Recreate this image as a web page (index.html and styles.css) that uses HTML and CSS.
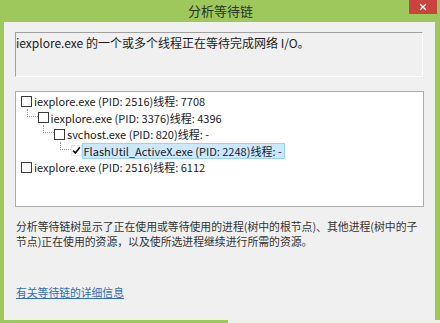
FILE: index.html
```html
<!DOCTYPE html>
<html lang="zh-CN">
<head>
<meta charset="utf-8">
<title>分析等待链</title>
<link rel="stylesheet" href="styles.css">
</head>
<body>
<div class="window">
  <div class="titlebar">
    <span class="title">分析等待链</span>
    <div class="close">
      <svg width="10" height="10" viewBox="0 0 10 10"><path d="M1.5 1.5 L8.5 8.5 M8.5 1.5 L1.5 8.5" stroke="#fff" stroke-width="1.6" fill="none"/></svg>
    </div>
  </div>
  <div class="client">
    <div class="msgbox">iexplore.exe 的一个或多个线程正在等待完成网络 I/O。</div>
    <div class="tree">
      <div class="row l0"><span class="cb"></span><span class="label">iexplore.exe (PID: 2516)线程: 7708</span></div>
      <div class="row l1"><span class="conn"></span><span class="cb"></span><span class="label">iexplore.exe (PID: 3376)线程: 4396</span></div>
      <div class="row l2"><span class="conn"></span><span class="cb"></span><span class="label">svchost.exe (PID: 820)线程: -</span></div>
      <div class="row l3"><span class="conn"></span><span class="cb checked"><svg width="11" height="11" viewBox="0 0 11 11"><path d="M1.4 5.6 L4.2 8.6 L9.6 1.6" stroke="#111" stroke-width="2" fill="none"/></svg></span><span class="label selected">FlashUtil_ActiveX.exe (PID: 2248)线程: -</span></div>
      <div class="row l0"><span class="cb"></span><span class="label">iexplore.exe (PID: 2516)线程: 6112</span></div>
    </div>
    <p class="desc"><span class="line">分析等待链树显示了正在使用或等待使用的进程(树中的根节点)、其他进程(树中的子</span><span class="line">节点)正在使用的资源，以及使所选进程继续进行所需的资源。</span></p>
    <a class="link" href="#">有关等待链的详细信息</a>
  </div>
</div>
</body>
</html>
```
FILE: styles.css
```css
html, body {
  margin: 0;
  padding: 0;
}
body {
  width: 440px;
  height: 323px;
  overflow: hidden;
  font-family: "Noto Sans CJK SC", "Noto Sans", sans-serif;
}
.window {
  width: 440px;
  height: 323px;
  box-sizing: border-box;
  background: #9fc85c linear-gradient(to right, #9fc85c 228px, #eef0ea 228px) no-repeat left bottom / 100% 3px;
  display: flex;
  flex-direction: column;
}
.titlebar {
  height: 22px;
  display: grid;
  grid-template-columns: 1fr auto 1fr;
  align-items: start;
}
.title {
  grid-column: 2;
  font-size: 13px;
  line-height: 22px;
  color: #2a3324;
  padding-left: 1px;
}
.close {
  grid-column: 3;
  justify-self: end;
  margin-right: 3px;
  width: 28px;
  height: 14px;
  background: #c9443f;
  display: flex;
  align-items: center;
  justify-content: center;
}
.close svg {
  width: 8px;
  height: 8px;
}
.client {
  flex: 1;
  margin: 0 5px 3px 4px;
  background: #f0f0f0;
  padding: 10px 12px 0 11px;
  display: flex;
  flex-direction: column;
  align-items: flex-start;
}
.msgbox {
  align-self: stretch;
  height: 45px;
  box-sizing: border-box;
  border-top: 1px solid #a0a0a0;
  border-left: 1px solid #a0a0a0;
  border-right: 1px solid #ffffff;
  border-bottom: 1px solid #ffffff;
  padding: 2px 0 0 0;
  font-size: 12px;
  line-height: 16px;
  color: #1a1a1a;
}
.tree {
  align-self: stretch;
  margin-top: 14px;
  margin-right: -1px;
  height: 116px;
  box-sizing: border-box;
  border: 1px solid #acacac;
  background: #ffffff;
  padding-top: 1px;
}
.row {
  height: 16.5px;
  display: flex;
  align-items: center;
  font-size: 11px;
  color: #1a1a1a;
  white-space: nowrap;
}
.l0 { padding-left: 5px; }
.l1 { padding-left: 10.5px; }
.l2 { padding-left: 27px; }
.l3 { padding-left: 43.5px; }
.conn {
  align-self: flex-start;
  width: 11px;
  height: 8px;
  margin-top: -1px;
  box-sizing: border-box;
  border-left: 1px dotted #9a9a9a;
  border-bottom: 1px dotted #9a9a9a;
}
.cb {
  width: 11px;
  height: 11px;
  box-sizing: border-box;
  border: 1px solid #3a3a3a;
  background: #fff;
  flex: none;
  display: flex;
  align-items: center;
  justify-content: center;
}
.cb.checked {
  border-color: #e8e8e8;
}
.label {
  margin-left: 0;
  padding: 0 2px 0 1px;
  line-height: 14px;
  border: 1px solid transparent;
}
.label.selected {
  background: #cce8ff;
  border-color: #99d1ff;
}
.desc {
  margin: 12px 0 0 1px;
  font-size: 10.85px;
  line-height: 15px;
  color: #333;
}
.line {
  display: block;
  white-space: nowrap;
}
.link {
  margin: 36px 0 0 1px;
  font-size: 10.8px;
  line-height: 15px;
  color: #2f6fb7;
  text-decoration: underline;
}
```
